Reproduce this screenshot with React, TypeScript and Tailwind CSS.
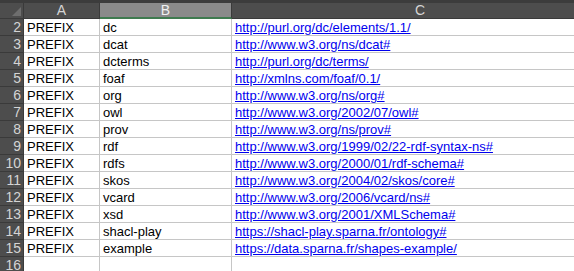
import React from "react";

const rows: [number, string, string, string][] = [
  [2, "PREFIX", "dc", "http://purl.org/dc/elements/1.1/"],
  [3, "PREFIX", "dcat", "http://www.w3.org/ns/dcat#"],
  [4, "PREFIX", "dcterms", "http://purl.org/dc/terms/"],
  [5, "PREFIX", "foaf", "http://xmlns.com/foaf/0.1/"],
  [6, "PREFIX", "org", "http://www.w3.org/ns/org#"],
  [7, "PREFIX", "owl", "http://www.w3.org/2002/07/owl#"],
  [8, "PREFIX", "prov", "http://www.w3.org/ns/prov#"],
  [9, "PREFIX", "rdf", "http://www.w3.org/1999/02/22-rdf-syntax-ns#"],
  [10, "PREFIX", "rdfs", "http://www.w3.org/2000/01/rdf-schema#"],
  [11, "PREFIX", "skos", "http://www.w3.org/2004/02/skos/core#"],
  [12, "PREFIX", "vcard", "http://www.w3.org/2006/vcard/ns#"],
  [13, "PREFIX", "xsd", "http://www.w3.org/2001/XMLSchema#"],
  [14, "PREFIX", "shacl-play", "https://shacl-play.sparna.fr/ontology#"],
  [15, "PREFIX", "example", "https://data.sparna.fr/shapes-example/"],
];

export default function App() {
  return (
    <div
      className="w-[574px] h-[271px] overflow-hidden bg-white flex flex-col"
      style={{ fontFamily: '"Liberation Sans", Arial, sans-serif' }}
    >
      <div className="h-[3px] bg-[#3c3c3c] shrink-0" />
      {/* header */}
      <div className="flex h-[16px] shrink-0 bg-[#4d4d4d] text-[#d4d4d4] text-[14px] leading-[15px]">
        <div className="w-[24px] shrink-0 relative border-r border-[#3a3a3a] border-b border-b-[#3a3a3a]">
          <div className="absolute right-[2px] bottom-[2px] w-0 h-0 border-l-[9px] border-l-transparent border-b-[9px] border-b-[#6e6e6e]" />
        </div>
        <div className="w-[76px] shrink-0 text-center border-r border-[#3a3a3a] border-b border-b-[#3a3a3a]">A</div>
        <div className="w-[132px] shrink-0 text-center bg-[#8a8a8a] text-[#f0f0f0] border-r border-[#3a3a3a] border-b-[2px] border-b-[#3f7a4f]">B</div>
        <div className="w-[376px] shrink-0 text-center border-b border-b-[#3a3a3a]">C</div>
      </div>
      {rows.concat([[16, "", "", ""]]).map(([n, a, b, c]) => (
        <div key={n} className="flex h-[17px] shrink-0 text-[13px] leading-[17px]">
          <div className="w-[24px] shrink-0 bg-[#4d4d4d] text-[#d4d4d4] text-[14px] text-right pr-[2px] border-b border-[#3a3a3a] border-r border-r-[#3a3a3a]">
            {n}
          </div>
          <div className="w-[76px] shrink-0 pl-[3px] text-black border-b border-r border-[#c6c6c6] whitespace-nowrap overflow-hidden">
            {a}
          </div>
          <div className="w-[132px] shrink-0 pl-[3px] text-black border-b border-r border-[#c6c6c6] whitespace-nowrap overflow-hidden">
            {b}
          </div>
          <div className="w-[376px] shrink-0 pl-[3px] border-b border-[#c6c6c6] whitespace-nowrap overflow-hidden">
            {c && <span className="text-[#0000ee] underline">{c}</span>}
          </div>
        </div>
      ))}
    </div>
  );
}
